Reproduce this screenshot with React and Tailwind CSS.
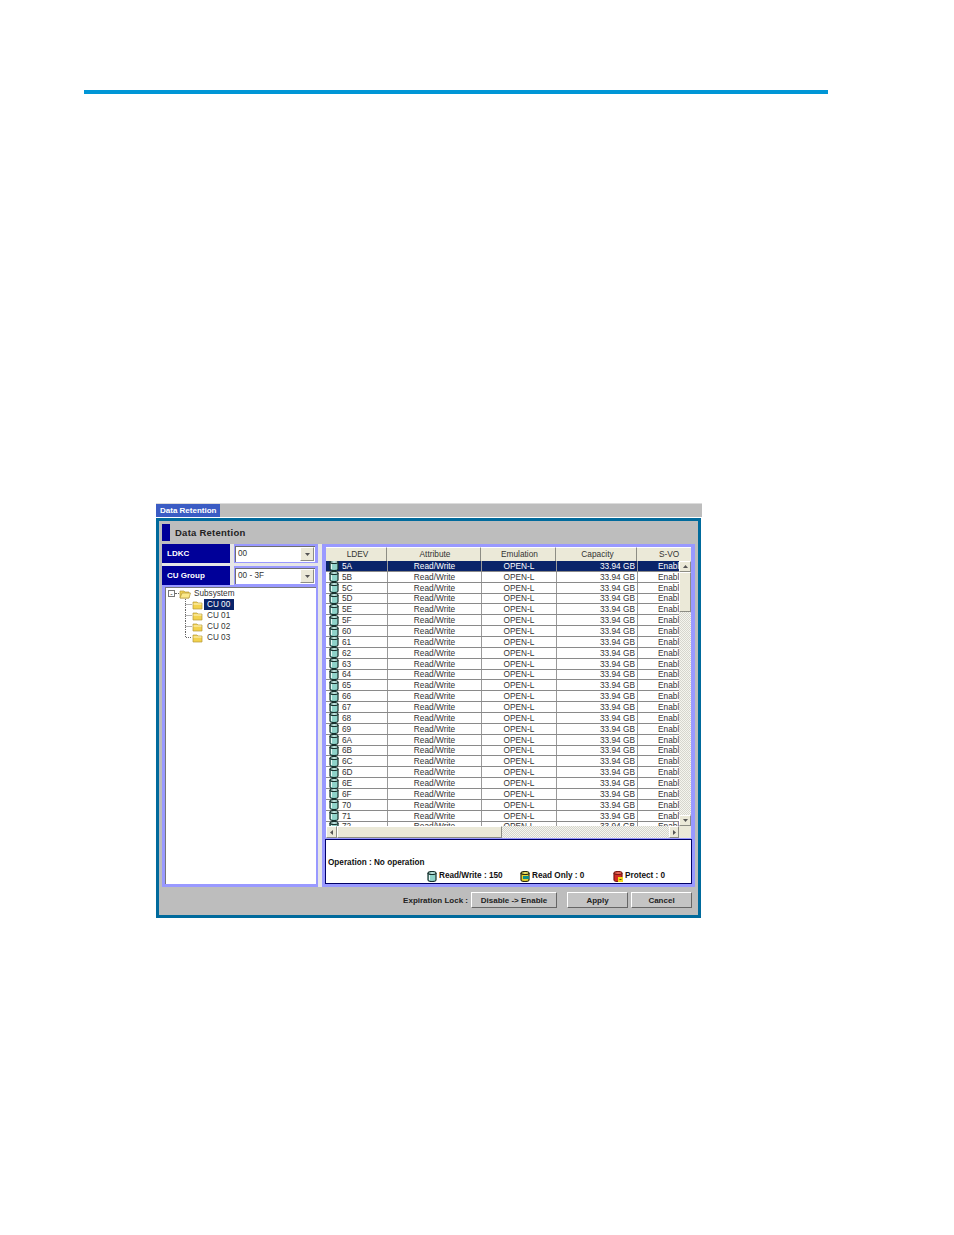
const rows = ["5A","5B","5C","5D","5E","5F","60","61","62","63","64","65","66","67","68","69","6A","6B","6C","6D","6E","6F","70","71","72"];

const Cylinder = ({ body = "#8fd3c9", top = "#c6ece6", line = "#17302c" }) => (
  <svg width="10" height="11" viewBox="0 0 10 11" className="shrink-0">
    <path d="M1 2v7c0 1 1.800 1.500 4 1.500S9 10 9 9V2" fill={body} stroke={line} strokeWidth="1.200" />
    <ellipse cx="5" cy="2" rx="4" ry="1.500" fill={top} stroke={line} strokeWidth="1.200" />
    <path d="M2.500 4v5" stroke="#e6f7f4" />
  </svg>
);

const ReadOnlyIcon = () => (
  <svg width="10" height="11" viewBox="0 0 10 11" className="shrink-0">
    <path d="M1 2v7c0 1 1.800 1.500 4 1.500S9 10 9 9V2" fill="#e8d22c" stroke="#2a2a10" strokeWidth="1.200" />
    <ellipse cx="5" cy="2" rx="4" ry="1.500" fill="#f6ea6a" stroke="#2a2a10" strokeWidth="1.200" />
    <path d="M3 5h6v3H3z" fill="#0f8f8a" />
  </svg>
);

const ProtectIcon = () => (
  <svg width="10" height="11" viewBox="0 0 10 11" className="shrink-0">
    <path d="M1 2v7c0 1 1.800 1.500 4 1.500S9 10 9 9V2" fill="#d42a22" stroke="#7a1a14" strokeWidth="1.200" />
    <ellipse cx="5" cy="2" rx="4" ry="1.500" fill="#ee6a5a" stroke="#7a1a14" strokeWidth="1.200" />
    <path d="M5 6h5v5H5z" fill="#f4d81c" />
    <path d="M6.500 8.500h2" stroke="#5a4a00" />
  </svg>
);

const Folder = ({ open }) => (
  <svg width="12" height="10" viewBox="0 0 12 10" className="shrink-0">
    <path d="M1 2h4l1 1h4v6H1z" fill="#f2d24e" stroke="#b59a3a" strokeWidth="0.700" />
    {open ? <path d="M3 4h8.500L10 9H1z" fill="#fbe98a" stroke="#b59a3a" strokeWidth="0.700" /> : <path d="M1.500 4h8" stroke="#fff6c8" />}
  </svg>
);

const Arrow = ({ d }) => (
  <svg width="7" height="7" viewBox="0 0 7 7">
    <path d={d} fill="#555" />
  </svg>
);

const ScrollButton = ({ d, className }) => (
  <div className={`flex items-center justify-center bg-[#ebe9d8] border border-t-white border-l-white border-b-[#8d8d84] border-r-[#8d8d84] ${className}`}>
    <Arrow d={d} />
  </div>
);

const Combo = ({ value }) => (
  <div className="h-[16px] w-[80px] flex items-center justify-between bg-white border-t border-l border-[#6f6f6f] pl-[2px] text-[8.200px] text-[#333]">
    <span>{value}</span>
    <ScrollButton d="M1 2h5L3.500 5z" className="w-[14px] h-[14px] mr-px" />
  </div>
);

const LeftLabel = ({ text, value }) => (
  <div className="flex h-[19px] bg-[#e6e6e6]">
    <div className="w-[68px] bg-[#000099] text-white font-bold text-[8px] flex items-center pl-[5px]">{text}</div>
    <div className="w-[4px]" />
    <div className="flex-1 bg-[#9999ff] flex items-center pl-[1px]">
      <Combo value={value} />
    </div>
  </div>
);

const TreeChild = ({ label, selected, last }) => (
  <div className="flex items-center h-[11px]">
    <svg width="24" height="11" viewBox="0 0 24 11" className="shrink-0">
      <path d={last ? "M17.500 0v5.500H24" : "M17.500 0v11M17.500 5.500H24"} stroke="#666" strokeDasharray="1 1" fill="none" />
    </svg>
    <Folder />
    <span className={`pl-[3px] h-[11px] leading-[11px] w-[30px] whitespace-nowrap ${selected ? "bg-[#0a246a] text-white" : "text-[#333]"}`}>{label}</span>
  </div>
);

const Row = ({ name, first }) => (
  <div className={`flex h-[10.870px] items-center border-b border-[#8a8a8a] text-[8.300px] leading-none ${first ? "bg-[#0a246a] text-white" : "bg-white text-[#333]"}`}>
    <div className="w-[61px] flex items-center gap-[3px] pl-[3px] h-full">
      <Cylinder />
      <span>{name}</span>
    </div>
    <div className="w-[94px] text-center h-full flex items-center justify-center border-l border-[#9a9a9a]">Read/Write</div>
    <div className="w-[75px] text-center h-full flex items-center justify-center border-l border-[#9a9a9a]">OPEN-L</div>
    <div className="w-[81px] text-right h-full flex items-center justify-end pr-[2px] border-l border-[#9a9a9a]">33.94 GB</div>
    <div className="w-[42px] h-full flex items-center overflow-hidden pl-[20px] whitespace-nowrap border-l border-[#9a9a9a]">Enable</div>
  </div>
);

const HeaderCell = ({ children, className }) => (
  <div className={`h-full flex items-center justify-center pl-[3px] bg-[#ebe9d8] border-r border-[#8d8d84] border-t border-t-white text-[8.300px] text-[#333] ${className}`}>{children}</div>
);

const Button = ({ children, className }) => (
  <div className={`h-[16px] flex items-center justify-center pt-px bg-[#c4c4c4] border border-t-white border-l-white border-b-[#666] border-r-[#666] text-[8px] font-bold text-[#222] ${className}`}>{children}</div>
);

export default function App() {
  return (
    <div className="min-h-[1235px] bg-white font-['Liberation_Sans',Arial,sans-serif] pt-[90px]">
      <div className="ml-[84px] w-[744px] h-[4px] bg-[#0096d6]" />

      <div className="ml-[156px] mt-[409px] w-[546px] h-[415px] flex flex-col">
        {/* tab strip */}
        <div className="h-[14px] bg-[#bdbdbd] border-t border-[#dcdcdc] flex shrink-0">
          <div className="w-[64px] bg-[#3b5cc4] text-white font-bold text-[8px] flex items-center pl-[4px]">Data Retention</div>
        </div>
        <div className="h-px bg-white shrink-0" />

        <div className="flex-1 mr-px border-[3px] border-[#006a9c] bg-[#bdbdbd] flex flex-col">
          <div className="h-[23px] flex items-center pl-[3px] shrink-0">
            <div className="w-[8px] h-[17px] bg-[#000099]" />
            <span className="ml-[5px] mt-px text-[9.500px] tracking-[0.25px] font-bold text-[#222]">Data Retention</span>
          </div>

          <div className="flex flex-1 ml-[3px] mr-[3px]">
            {/* left side */}
            <div className="w-[156px] flex flex-col shrink-0">
              <LeftLabel text="LDKC" value="00" />
              <div className="h-[3px] bg-[#e6e6e6]" />
              <LeftLabel text="CU Group" value="00 - 3F" />
              <div className="flex-1 bg-[#9999ff] pl-[3px] pr-[2px] pb-[3px] pt-[2px]">
                <div className="h-full bg-white border-t border-l border-[#777] pl-[2px] text-[8.200px] text-[#333]">
                  <div className="flex items-center h-[11px]">
                    <span className="w-[7px] h-[7px] border border-[#777] flex items-center justify-center text-[7px] leading-none">-</span>
                    <span className="w-[4px] border-t border-dotted border-[#666]" />
                    <Folder open />
                    <span className="ml-[3px] mt-px">Subsystem</span>
                  </div>
                  <TreeChild label="CU 00" selected />
                  <TreeChild label="CU 01" />
                  <TreeChild label="CU 02" />
                  <TreeChild label="CU 03" last />
                </div>
              </div>
            </div>

            <div className="w-[4px] bg-[#e6e6e6] shrink-0" />

            {/* right side */}
            <div className="flex-1 bg-[#9999ff] pt-[3px] pl-[4px] pr-[3px] pb-[3px] flex flex-col">
              <div className="h-[14px] flex shrink-0">
                <HeaderCell className="w-[61px]">LDEV</HeaderCell>
                <HeaderCell className="w-[94px]">Attribute</HeaderCell>
                <HeaderCell className="w-[75px]">Emulation</HeaderCell>
                <HeaderCell className="w-[81px]">Capacity</HeaderCell>
                <div className="w-[54px] h-full flex items-center pl-[22px] bg-[#ebe9d8] border-t border-white text-[8.300px] text-[#333]">S-VO</div>
                <div className="flex-1 bg-[#9999ff]" />
              </div>

              <div className="flex h-[265px] shrink-0">
                <div className="w-[353px] overflow-hidden bg-white">
                  {rows.map((r, i) => <Row key={r} name={r} first={i === 0} />)}
                </div>
                <div className="w-[12px] flex flex-col">
                  <ScrollButton d="M1 5h5L3.500 2z" className="h-[11px] shrink-0" />
                  <div className="h-[40px] shrink-0 bg-[#ebe9d8] border border-t-white border-l-white border-b-[#8d8d84] border-r-[#8d8d84]" />
                  <div className="flex-1 bg-[repeating-conic-gradient(#d6d6ce_0_25%,#f5f5ee_0_50%)] bg-[length:2px_2px]" />
                  <ScrollButton d="M1 2h5L3.500 5z" className="h-[11px] shrink-0" />
                </div>
              </div>

              <div className="flex h-[12px] w-[365px] shrink-0 bg-[#ebe9d8]">
                <ScrollButton d="M5 1v5L2 3.500z" className="w-[11px]" />
                <div className="w-[165px] bg-[#ebe9d8] border border-t-white border-l-white border-b-[#8d8d84] border-r-[#8d8d84]" />
                <div className="w-[167px] bg-[repeating-conic-gradient(#d6d6ce_0_25%,#f5f5ee_0_50%)] bg-[length:2px_2px]" />
                <ScrollButton d="M2 1v5l3-2.500z" className="w-[10px]" />
              </div>

              <div className="flex-1 mt-px -ml-px bg-white border border-[#000066] flex flex-col justify-end pb-[1px] pl-[2px] text-[8.200px] text-[#111]">
                <div className="font-bold leading-[10px]">Operation : No operation</div>
                <div className="flex items-center h-[11px] mt-[3px] ml-[99px] font-bold">
                  <Cylinder />
                  <span className="ml-[2px] w-[81px]">Read/Write : 150</span>
                  <ReadOnlyIcon />
                  <span className="ml-[2px] w-[81px]">Read Only : 0</span>
                  <ProtectIcon />
                  <span className="ml-[2px]">Protect : 0</span>
                </div>
              </div>
            </div>
          </div>

          {/* bottom bar */}
          <div className="h-[28px] shrink-0 flex items-center justify-end pr-[6px] pb-[2px] text-[8px] font-bold text-[#222]">
            <span className="mr-[3px] mt-px">Expiration Lock :</span>
            <Button className="w-[86px] mr-[10px]">Disable -&gt; Enable</Button>
            <Button className="w-[61px] mr-[3px]">Apply</Button>
            <Button className="w-[61px]">Cancel</Button>
          </div>
        </div>
      </div>
    </div>
  );
}
